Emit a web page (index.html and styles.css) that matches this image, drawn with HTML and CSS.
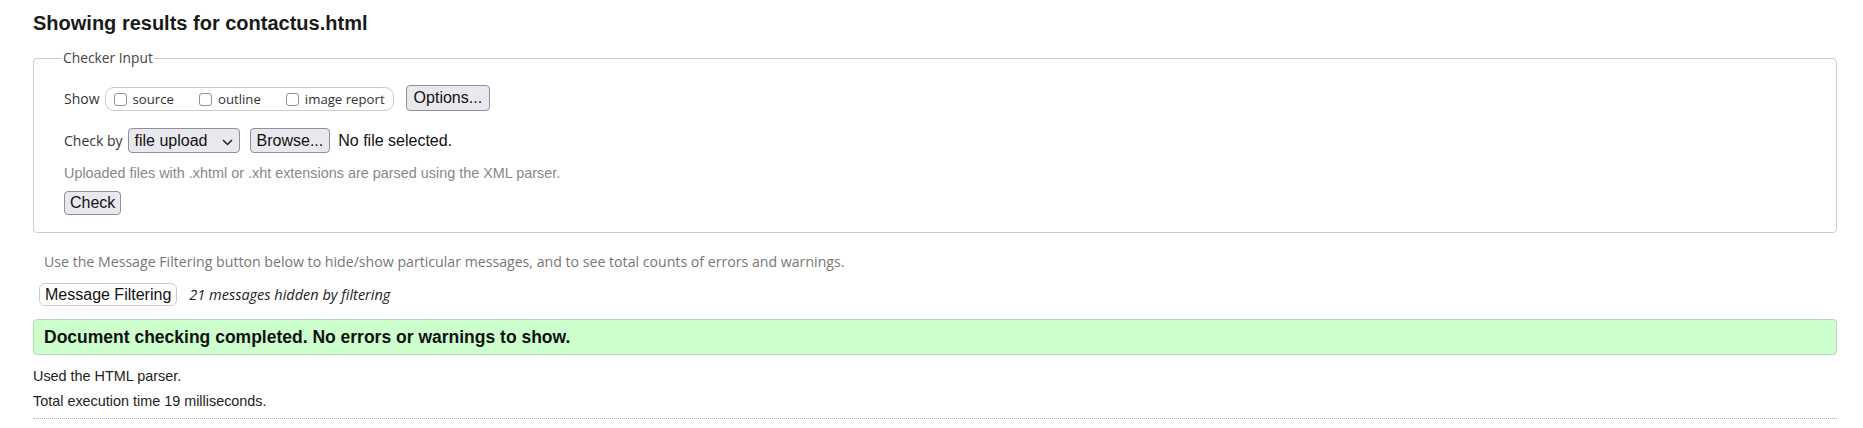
FILE: index.html
```html
<!DOCTYPE html>
<html lang="en">
<head>
<meta charset="utf-8">
<title>Showing results for contactus.html</title>
<link rel="stylesheet" href="styles.css">
</head>
<body>
<h2 class="title">Showing results for contactus.html</h2>
<fieldset class="checker">
  <legend class="checker-legend">Checker Input</legend>
  <div class="row row-show">
    <span class="lbl">Show</span>
    <div class="pill">
      <label class="opt"><span class="cb"></span>source</label>
      <label class="opt"><span class="cb"></span>outline</label>
      <label class="opt"><span class="cb"></span>image report</label>
    </div>
    <button class="btn btn-options">Options...</button>
  </div>
  <div class="row row-check">
    <span class="lbl">Check by</span>
    <div class="select"><span>file upload</span><svg class="chev" width="11" height="7" viewBox="0 0 11 7"><path d="M1 1 L5.5 5.5 L10 1" fill="none" stroke="#222" stroke-width="1.5"/></svg></div>
    <button class="btn btn-browse">Browse...</button>
    <span class="nofile">No file selected.</span>
  </div>
  <p class="hint">Uploaded files with .xhtml or .xht extensions are parsed using the XML parser.</p>
  <button class="btn btn-check">Check</button>
</fieldset>
<p class="filter-note">Use the Message Filtering button below to hide/show particular messages, and to see total counts of errors and warnings.</p>
<div class="filter-row">
  <button class="btn-filter">Message Filtering</button>
  <em class="hidden-count">21 messages hidden by filtering</em>
</div>
<div class="success">Document checking completed. No errors or warnings to show.</div>
<p class="meta">Used the HTML parser.</p>
<p class="meta">Total execution time 19 milliseconds.</p>
<hr class="end">
</body>
</html>
```
FILE: styles.css
```css
html, body { background: #fff; }
body {
  margin: 0;
  padding: 11px 26px 0 33px;
  font-family: "Liberation Sans", Arial, sans-serif;
  font-size: 14.4px;
  color: #222;
}
.title {
  margin: 0;
  font-size: 20px;
  line-height: 24px;
  font-weight: bold;
  color: #1a1a1a;
}
.checker {
  margin: 14px 0 0;
  padding: 18px 30px 17px 30px;
  border: 1px solid #ccc;
  border-radius: 4px;
  min-width: 0;
}
.checker-legend {
  font-family: "Open Sans", sans-serif;
  font-size: 13.8px;
  line-height: 18px;
  color: #444;
  padding: 0 1px;
  margin-left: -2px;
}
.row {
  display: flex;
  align-items: center;
}
.row-show { height: 26px; }
.row-check { height: 25px; margin-top: 17px; }
.lbl {
  font-family: "Open Sans", sans-serif;
  font-size: 14px;
  color: #333;
  margin-right: 5px;
}
.pill {
  display: flex;
  align-items: center;
  gap: 25px;
  box-sizing: border-box;
  height: 24px;
  margin-top: 2px;
  padding: 0 8px;
  border: 1px solid #ccc;
  border-radius: 9px;
}
.opt {
  display: flex;
  align-items: center;
  gap: 6px;
  font-family: "Open Sans", sans-serif;
  font-size: 13.2px;
  color: #333;
}
.cb {
  box-sizing: border-box;
  width: 13px;
  height: 13px;
  border: 1px solid #8f8f9d;
  border-radius: 3px;
  background: #fff;
}
.btn {
  box-sizing: border-box;
  font-family: "Liberation Sans", Arial, sans-serif;
  font-size: 16px;
  color: #111;
  background: #e9e9ed;
  border: 1px solid #8f8f9d;
  border-radius: 4px;
  padding: 0 6px;
  margin: 0;
}
.btn-options { height: 26px; margin-left: 12px; padding: 0 7px; }
.select {
  box-sizing: border-box;
  display: flex;
  align-items: center;
  justify-content: space-between;
  width: 112px;
  height: 25px;
  padding: 0 6px 0 6px;
  font-size: 16px;
  color: #111;
  background: #e9e9ed;
  border: 1px solid #8f8f9d;
  border-radius: 4px;
}
.chev { margin-top: 3px; }
.btn-browse { height: 25px; margin-left: 10px; }
.nofile {
  margin-left: 8px;
  font-size: 16px;
  color: #111;
}
.hint {
  margin: 10px 0 0;
  line-height: 20px;
  color: #888;
}
.btn-check {
  display: block;
  height: 24px;
  margin-top: 8px;
  padding: 0 5px;
}
.filter-note {
  margin: 19px 0 0;
  padding-left: 11px;
  font-family: "Open Sans", sans-serif;
  font-size: 14.15px;
  line-height: 20px;
  color: #777;
}
.filter-row {
  display: flex;
  align-items: center;
  gap: 12px;
  margin-top: 11px;
  padding-left: 6px;
  height: 23px;
}
.btn-filter {
  box-sizing: border-box;
  height: 23px;
  padding: 0 5px;
  font-family: "Liberation Sans", Arial, sans-serif;
  font-size: 16px;
  color: #111;
  background: #fff;
  border: 1px solid #ccc;
  border-radius: 6px;
}
.hidden-count {
  font-family: "Open Sans", sans-serif;
  font-size: 14.5px;
  font-style: italic;
  color: #222;
}
.success {
  margin-top: 13px;
  padding: 6px 10px;
  line-height: 22px;
  font-size: 17.5px;
  font-weight: bold;
  color: #111;
  background: #ccffcc;
  border: 1px solid #b8d9b8;
  border-radius: 4px;
}
.meta {
  margin: 11px 0 0;
  line-height: 20px;
  color: #222;
}
.meta + .meta { margin-top: 5px; }
.end {
  margin: 7px 0 0;
  height: 0;
  border: 0;
  border-top: 1px dotted #aaa;
}
```
